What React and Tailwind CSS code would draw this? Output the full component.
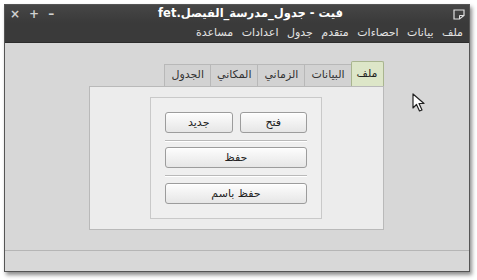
import React from "react";

const font = { fontFamily: '"DejaVu Sans", "Liberation Sans", sans-serif' };

function Btn({ children, className = "" }) {
  return (
    <button
      className={`h-[21px] shrink-0 rounded-[3px] border border-[#9c9c9c] bg-gradient-to-b from-[#fdfdfd] to-[#e6e6e6] text-[11px] text-[#222] leading-none shadow-[0_1px_0_#fff_inset] ${className}`}
    >
      {children}
    </button>
  );
}

function Sep({ className = "" }) {
  return (
    <div className={`shrink-0 h-[2px] border-t border-[#b9b9b9] bg-white ${className}`} />
  );
}

function Cursor() {
  return (
    <svg className="absolute left-[412px] top-[93px]" width="14" height="19" viewBox="0 0 14 19">
      <path d="M1 1 L1 15 L4.5 11.5 L7.5 18 L10 17 L7 10.5 L12 10.5 Z" fill="#fff" stroke="#222" strokeWidth="1.2" strokeLinejoin="round" />
    </svg>
  );
}

function WinIcon() {
  return (
    <svg width="12" height="11" viewBox="0 0 12 11" className="mr-[4px]">
      <path d="M1 1 H11 V6.5 L6.5 10 H1 Z" fill="none" stroke="#e0e0e0" strokeWidth="1.2" />
      <path d="M6.5 10 V6.5 H11" fill="none" stroke="#e0e0e0" strokeWidth="1" />
    </svg>
  );
}

export default function App() {
  const tabs = ["ملف", "البيانات", "الزماني", "المكاني", "الجدول"];
  const menu = ["ملف", "بيانات", "احصاءات", "متقدم", "جدول", "اعدادات", "مساعدة"];

  return (
    <div className="relative w-[477px] h-[280px] bg-white overflow-hidden" style={font}>
      <div className="absolute left-[4px] top-[4px] w-[466px] h-[268px] flex flex-col border border-[#555] shadow-[2px_3px_4px_rgba(0,0,0,0.45)] bg-[#d7d7d7]">
        {/* title bar */}
        <div className="h-[18px] flex items-center bg-gradient-to-b from-[#464646] to-[#3a3a3a] text-white">
          <div className="flex items-center gap-[9px] pl-[5px] text-[#d0d0d0] text-[12px] font-bold">
            <span>×</span>
            <span>+</span>
            <span>–</span>
          </div>
          <div dir="rtl" className="flex-1 text-right pr-[110px] text-[11.5px] font-bold">
            فيت - جدول_مدرسة_الفيصل.fet
          </div>
          <WinIcon />
        </div>
        {/* menu bar */}
        <div dir="rtl" className="h-[20px] flex items-center gap-[8.5px] pr-[6px] pt-[2px] bg-[#3a3a3a] text-[#e4e4e4] text-[11px] border-b border-[#2c2c2c]">
          {menu.map((m) => (
            <span key={m}>{m}</span>
          ))}
        </div>
        {/* content */}
        <div className="flex-1 flex justify-center pt-[18px] pr-[2px]">
          <div className="w-[295px] flex flex-col">
            <div dir="rtl" className="flex items-end h-[25px]">
              {tabs.map((t, i) =>
                i === 0 ? (
                  <div key={t} className="h-[25px] px-[5px] flex items-center border border-b-0 border-[#a9b58f] bg-[#dde6c8] text-[11px] text-[#222] rounded-t-[2px]">
                    {t}
                  </div>
                ) : (
                  <div key={t} className="h-[22px] px-[6px] flex items-center border border-b-0 border-r-0 border-[#b8b8b8] bg-[#d2d2d2] text-[11px] text-[#333]">
                    {t}
                  </div>
                )
              )}
            </div>
            <div className="h-[144px] border border-[#b9b9b9] bg-[#ececec] flex justify-center items-center">
              <div className="w-[172px] h-[122px] border border-[#c9c9c9] bg-[#efefef] pt-[14px] px-[14px] flex flex-col">
                <div dir="rtl" className="flex gap-[7px] shrink-0">
                  <Btn className="flex-1">فتح</Btn>
                  <Btn className="flex-1">جديد</Btn>
                </div>
                <Sep className="mt-[7px] mb-[5px]" />
                <Btn>حفظ</Btn>
                <Sep className="mt-[7px] mb-[6px]" />
                <Btn>حفظ باسم</Btn>
              </div>
            </div>
          </div>
        </div>
        {/* status bar */}
        <div className="h-[21px] border-t border-[#b5b5b5] bg-[#d8d8d8]" />
      </div>
      <Cursor />
    </div>
  );
}
